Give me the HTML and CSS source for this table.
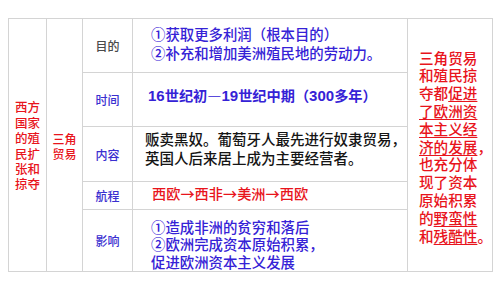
FILE: index.html
```html
<!DOCTYPE html>
<html lang="zh">
<head>
<meta charset="utf-8">
<link rel="stylesheet" href="styles.css">
</head>
<body>
<div class="table">
  <div class="cell c1"><div>西方<br>国家<br>的殖<br>民扩<br>张和<br>掠夺</div></div>
  <div class="cell c2"><div>三角<br>贸易</div></div>
  <div class="cell lbl gray r1"><div>目的</div></div>
  <div class="cell txt blue r1t"><div>①获取更多利润（根本目的）<br>②补充和增加美洲殖民地的劳动力。</div></div>
  <div class="cell c5"><div>三角贸易<br>和殖民掠<br>夺都<u>促进</u><br><u>了欧洲资</u><br><u>本主义经</u><br><u>济的发展</u>，<br>也充分体<br>现了资本<br>原始积累<br>的<u>野蛮性</u><br>和<u>残酷性</u>。</div></div>
  <div class="cell lbl r2"><div>时间</div></div>
  <div class="cell txt blue bold r2t"><div><span class="num">16</span>世纪初—<span class="num">19</span>世纪中期（<span class="num">300</span>多年）</div></div>
  <div class="cell lbl r3"><div>内容</div></div>
  <div class="cell txt dark r3t"><div>贩卖黑奴。葡萄牙人最先进行奴隶贸易，<br>英国人后来居上成为主要经营者。</div></div>
  <div class="cell lbl r4"><div>航程</div></div>
  <div class="cell txt red r4t"><div>西欧→西非→美洲→西欧</div></div>
  <div class="cell lbl r5"><div>影响</div></div>
  <div class="cell txt blue r5t"><div>①造成非洲的贫穷和落后<br>②欧洲完成资本原始积累，<br>促进欧洲资本主义发展</div></div>
</div>
</body>
</html>
```

FILE: styles.css
```css
html, body {
  margin: 0;
  padding: 0;
  background: #ffffff;
}
body {
  padding: 18px 0 0 8px;
  font-family: "Noto Sans CJK SC", "Liberation Sans", sans-serif;
}
.table {
  display: grid;
  grid-template-columns: 37px 35px 49px 274px 84px;
  grid-template-rows: 53px 53px 54px 27px 61px;
  gap: 1px;
  padding: 1px;
  background: #d4d4d4;
  width: 483px;
}
.cell {
  background: #ffffff;
  display: flex;
  align-items: center;
  box-sizing: border-box;
  font-weight: 500;
}
.c1 {
  grid-column: 1;
  grid-row: 1 / 6;
  justify-content: center;
  text-align: center;
  color: #e8141c;
  font-size: 12.5px;
  line-height: 15.4px;
  padding-top: 1px;
}
.c2 {
  grid-column: 2;
  grid-row: 1 / 6;
  justify-content: center;
  text-align: center;
  color: #e8141c;
  font-size: 12px;
  line-height: 15px;
  padding-top: 1px;
}
.c5 {
  grid-column: 5;
  grid-row: 1 / 6;
  color: #e8141c;
  font-size: 14.6px;
  line-height: 17.8px;
  padding-left: 11px;
  padding-top: 3px;
  white-space: nowrap;
}
.c5 u {
  text-decoration-thickness: 1px;
  text-underline-offset: 2px;
}
.lbl {
  grid-column: 3;
  justify-content: center;
  font-size: 12px;
  color: #3a2fd0;
}
.lbl.gray { color: #4a4a4a; }
.r1 { grid-row: 1; }
.r2 { grid-row: 2; }
.r3 { grid-row: 3; }
.r4 { grid-row: 4; }
.r5 { grid-row: 5; }
.txt {
  grid-column: 4;
  font-size: 14.4px;
  white-space: nowrap;
}
.blue { color: #3522d6; }
.red { color: #e8141c; }
.dark { color: #151515; }
.bold { font-weight: 700; }
.num {
  font-family: "Liberation Sans", sans-serif;
  font-weight: 700;
  font-size: 15px;
}
.r1t { grid-row: 1; padding-left: 18px; line-height: 19px; padding-bottom: 6px; }
.r2t { grid-row: 2; padding-left: 15px; padding-bottom: 10px; font-size: 14.2px; }
.r3t { grid-row: 3; padding-left: 12px; line-height: 19px; padding-bottom: 12px; font-size: 14.5px; }
.r4t { grid-row: 4; padding-left: 19px; padding-bottom: 5px; font-size: 14.2px; }
.r5t { grid-row: 5; padding-left: 18px; line-height: 17.5px; padding-top: 7px; }
```
